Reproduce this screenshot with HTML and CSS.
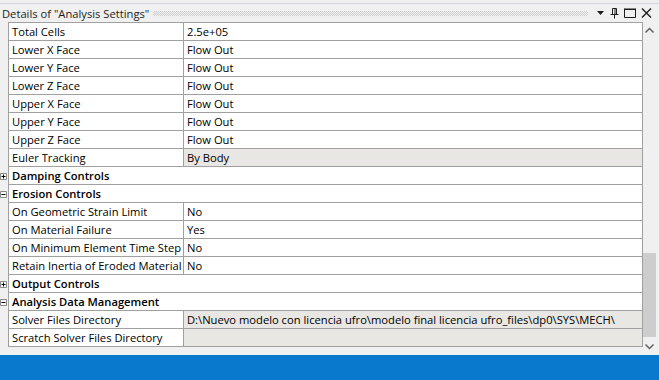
FILE: index.html
```html
<!DOCTYPE html>
<html lang="en">
<head>
  <meta charset="UTF-8">
  <title>Details of "Analysis Settings"</title>
  <link rel="stylesheet" href="styles.css">
</head>
<body>
  <div class="panel">
    <div class="titlebar">
      <span class="title">Details of "Analysis Settings"</span>
      <span class="grip"></span>
      <span class="tool">
        <svg width="8" height="5" viewBox="0 0 8 5"><path d="M0 0h7L3.5 4z" fill="#1e1e1e"/></svg>
      </span>
      <span class="tool">
        <svg width="9" height="11" viewBox="0 0 9 11"><path d="M2.5 0.5h4M2.5 0.5v6M6.5 0.5v6M5 0.5v6M0.5 6.5h8M4.5 6.5v4" stroke="#1e1e1e" fill="none"/></svg>
      </span>
      <span class="tool">
        <svg width="12" height="10" viewBox="0 0 12 10"><path d="M0.5 1h11M0.5 1.5h11M0.5 0.5v9h11v-9" stroke="#1e1e1e" fill="none"/></svg>
      </span>
      <span class="tool">
        <svg width="11" height="10" viewBox="0 0 11 10"><path d="M1 0.5l9 9M10 0.5l-9 9" stroke="#1e1e1e" stroke-width="1.4" fill="none"/></svg>
      </span>
    </div>

    <div class="body">
      <div class="grid">
        <div class="row"><span class="gutter"></span><span class="label">Total Cells</span><span class="value">2.5e+05</span></div>
        <div class="row"><span class="gutter"></span><span class="label">Lower X Face</span><span class="value">Flow Out</span></div>
        <div class="row"><span class="gutter"></span><span class="label">Lower Y Face</span><span class="value">Flow Out</span></div>
        <div class="row"><span class="gutter"></span><span class="label">Lower Z Face</span><span class="value">Flow Out</span></div>
        <div class="row"><span class="gutter"></span><span class="label">Upper X Face</span><span class="value">Flow Out</span></div>
        <div class="row"><span class="gutter"></span><span class="label">Upper Y Face</span><span class="value">Flow Out</span></div>
        <div class="row"><span class="gutter"></span><span class="label">Upper Z Face</span><span class="value">Flow Out</span></div>
        <div class="row"><span class="gutter"></span><span class="label">Euler Tracking</span><span class="value readonly">By Body</span></div>
        <div class="row">
          <span class="gutter"><svg width="8" height="9" viewBox="0 0 8 9"><path d="M0.5 1.5h6v6h-6z" fill="#fff" stroke="#8a8a8a"/><path d="M1.5 4.5h4M3.5 2.5v4" stroke="#000"/></svg></span>
          <span class="group">Damping Controls</span>
        </div>
        <div class="row">
          <span class="gutter"><svg width="8" height="9" viewBox="0 0 8 9"><path d="M0.5 1.5h6v6h-6z" fill="#fff" stroke="#8a8a8a"/><path d="M1.5 4.5h4" stroke="#000"/></svg></span>
          <span class="group">Erosion Controls</span>
        </div>
        <div class="row"><span class="gutter"></span><span class="label">On Geometric Strain Limit</span><span class="value">No</span></div>
        <div class="row"><span class="gutter"></span><span class="label">On Material Failure</span><span class="value">Yes</span></div>
        <div class="row"><span class="gutter"></span><span class="label">On Minimum Element Time Step</span><span class="value">No</span></div>
        <div class="row"><span class="gutter"></span><span class="label">Retain Inertia of Eroded Material</span><span class="value">No</span></div>
        <div class="row">
          <span class="gutter"><svg width="8" height="9" viewBox="0 0 8 9"><path d="M0.5 1.5h6v6h-6z" fill="#fff" stroke="#8a8a8a"/><path d="M1.5 4.5h4M3.5 2.5v4" stroke="#000"/></svg></span>
          <span class="group">Output Controls</span>
        </div>
        <div class="row">
          <span class="gutter"><svg width="8" height="9" viewBox="0 0 8 9"><path d="M0.5 1.5h6v6h-6z" fill="#fff" stroke="#8a8a8a"/><path d="M1.5 4.5h4" stroke="#000"/></svg></span>
          <span class="group">Analysis Data Management</span>
        </div>
        <div class="row"><span class="gutter"></span><span class="label">Solver Files Directory</span><span class="value readonly">D:\Nuevo modelo con licencia ufro\modelo final licencia ufro_files\dp0\SYS\MECH\</span></div>
        <div class="row"><span class="gutter"></span><span class="label">Scratch Solver Files Directory</span><span class="value readonly"></span></div>
      </div>

      <div class="scrollbar">
        <div class="arrow up">
          <svg width="13" height="8" viewBox="0 0 13 8"><path d="M2.5 5.5l4-4 4 4" stroke="#606060" stroke-width="1.5" fill="none"/></svg>
        </div>
        <div class="track"><div class="thumb"></div></div>
        <div class="arrow down">
          <svg width="13" height="8" viewBox="0 0 13 8"><path d="M2.5 2.5l4 4 4-4" stroke="#606060" stroke-width="1.5" fill="none"/></svg>
        </div>
      </div>
    </div>

    <div class="statusbar"></div>
  </div>
</body>
</html>
```

FILE: styles.css
```css
body {
  margin: 0;
  background: #f0f0f0;
  font-family: "Open Sans", "Noto Sans", sans-serif;
  font-size: 11.2px;
  color: #000;
}
.panel {
  width: 659px;
  height: 380px;
  display: flex;
  flex-direction: column;
  overflow: hidden;
}
.titlebar {
  height: 18px;
  margin-top: 3px;
  border-top: 1px solid #d6d6de;
  display: flex;
  align-items: center;
  padding-left: 2px;
  padding-right: 7px;
}
.title {
  color: #1e1e1e;
  white-space: nowrap;
  font-size: 11.2px;
}
.grip {
  flex: 1;
  height: 5px;
  margin: 0 4px 0 4px;
  background: repeating-conic-gradient(#cfcfcf 0 25%, transparent 0 50%) 0 0 / 2px 2px;
}
.tool {
  display: flex;
  align-items: center;
  margin-left: 5px;
}
.body {
  display: flex;
  height: 333px;
}
.grid {
  width: 643px;
}
.row {
  display: grid;
  grid-template-columns: 8px 176px 1fr;
  height: 18px;
}
.row > span {
  box-sizing: border-box;
  height: 18px;
  line-height: 17px;
  white-space: nowrap;
  overflow: hidden;
}
.row:first-child {
  height: 19px;
}
.row:first-child > .label,
.row:first-child > .value {
  border-top: 1px solid #a0a0a0;
  height: 19px;
}
.gutter {
  display: flex;
  align-items: center;
}
.label {
  background: #fff;
  border-left: 1px solid #a0a0a0;
  border-right: 1px solid #a0a0a0;
  border-bottom: 1px solid #a0a0a0;
  padding-left: 3px;
}
.value {
  background: #fff;
  border-right: 1px solid #a0a0a0;
  border-bottom: 1px solid #a0a0a0;
  padding-left: 3px;
}
.value.readonly {
  background: #e8e7e4;
}
.group {
  grid-column: 2 / 4;
  background: #fff;
  border-left: 1px solid #a0a0a0;
  border-right: 1px solid #a0a0a0;
  border-bottom: 1px solid #a0a0a0;
  padding-left: 3px;
  font-weight: 600;
}
.scrollbar {
  width: 13px;
  display: flex;
  flex-direction: column;
}
.arrow {
  display: flex;
  align-items: center;
}
.arrow.up {
  height: 17px;
}
.arrow.down {
  height: 18px;
}
.track {
  flex: 1;
}
.thumb {
  margin-top: 214px;
  height: 84px;
  background: #cdcdcd;
}
.statusbar {
  margin-top: auto;
  height: 25px;
  background: #0879cc;
}
```
